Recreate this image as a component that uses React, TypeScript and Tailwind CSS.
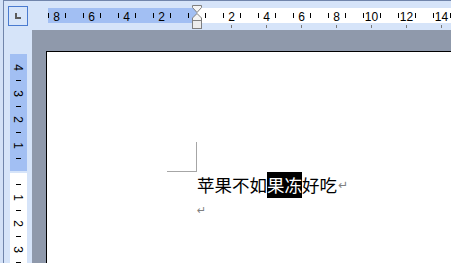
import React from "react";

// horizontal ruler: origin at the left indent, 17.5px per unit
const H_ORIGIN = 196.5;
const H_UNIT = 17.5;
// vertical ruler: origin at top margin, 26px per unit
const V_ORIGIN = 171.5;
const V_UNIT = 26;

function TopRuler() {
  const ticks: number[] = [];
  for (let k = -9; k <= 15; k++) {
    if (k === 0) continue;
    const p = H_ORIGIN + (k > 0 ? k - 0.5 : k + 0.5) * H_UNIT;
    if (p >= 47 && p <= 451) ticks.push(p);
  }
  const labels: { x: number; t: string }[] = [];
  for (let k = 1; k <= 4; k++) labels.push({ x: H_ORIGIN - 2 * k * H_UNIT, t: String(2 * k) });
  for (let k = 1; k <= 7; k++) labels.push({ x: H_ORIGIN + 2 * k * H_UNIT, t: String(2 * k) });
  const tabs = [1, 2, 3, 4, 5, 6, 7].map((k) => H_ORIGIN + 2 * k * H_UNIT);

  return (
    <svg width={419} height={29} viewBox="32 1 419 29" className="block shrink-0">
      <rect x={48} y={8} width={149} height={15} fill="#a2bff3" />
      <rect x={197} y={8} width={254} height={15} fill="#ffffff" />
      {ticks.map((p) => (
        <rect key={p} x={Math.round(p)} y={13} width={1} height={5} fill="#000" />
      ))}
      {labels.map((l) => (
        <text
          key={l.x}
          x={l.x}
          y={20.5}
          textAnchor="middle"
          fontSize={12}
          fontFamily="'Liberation Sans', Arial, sans-serif"
          fill="#000"
        >
          {l.t}
        </text>
      ))}
      {tabs.map((p) => (
        <rect key={p} x={Math.floor(p)} y={25} width={1} height={3} fill="#7a7a7a" />
      ))}
      {/* indent markers */}
      <polygon
        points="192.5,5.5 201.5,5.5 201.5,7.5 197,12.5 192.5,7.5"
        fill="#f4f4f4"
        stroke="#7f7f7f"
      />
      <polygon
        points="197,13.5 201.5,18 201.5,20.5 192.5,20.5 192.5,18"
        fill="#f4f4f4"
        stroke="#7f7f7f"
      />
      <rect x={192.5} y={20.5} width={9} height={8} fill="#ececec" stroke="#7f7f7f" />
    </svg>
  );
}

function LeftRuler() {
  const labels = [
    { y: V_ORIGIN - 4 * V_UNIT, t: "4" },
    { y: V_ORIGIN - 3 * V_UNIT, t: "3" },
    { y: V_ORIGIN - 2 * V_UNIT, t: "2" },
    { y: V_ORIGIN - 1 * V_UNIT, t: "1" },
    { y: V_ORIGIN + 1 * V_UNIT, t: "1" },
    { y: V_ORIGIN + 2 * V_UNIT, t: "2" },
    { y: V_ORIGIN + 3 * V_UNIT, t: "3" },
  ];
  const ticks = [-3.5, -2.5, -1.5, -0.5, 0.5, 1.5, 2.5, 3.5].map((k) => V_ORIGIN + k * V_UNIT);

  return (
    <svg width={28} height={233} viewBox="4 30 28 233" className="block">
      <rect x={10} y={54} width={17} height={117} fill="#a2bff3" />
      <rect x={10} y={173} width={17} height={90} fill="#ffffff" />
      {ticks.map((p) => (
        <rect key={p} x={16} y={Math.floor(p)} width={5} height={1} fill="#000" />
      ))}
      {labels.map((l) => (
        <text
          key={l.y}
          transform={`translate(13.5 ${l.y}) rotate(90)`}
          textAnchor="middle"
          fontSize={12}
          fontFamily="'Liberation Sans', Arial, sans-serif"
          fill="#000"
        >
          {l.t}
        </text>
      ))}
    </svg>
  );
}

function TabSelector() {
  return (
    <div className="h-[20px] w-[20px] border border-[#4a7bd0] bg-[#d7e5fa]">
      <svg width={18} height={18} viewBox="0 0 18 18" className="block">
        <rect x={6} y={6} width={2} height={6} fill="#5c5c5c" />
        <rect x={6} y={10} width={6} height={2} fill="#5c5c5c" />
      </svg>
    </div>
  );
}

export default function App() {
  return (
    <div className="flex h-[263px] w-[451px] overflow-hidden bg-[#d3e1f7] pl-[3px]">
      <div className="flex flex-1 flex-col border-l border-t border-[#7185ab] bg-[#d6e4f9]">
        {/* top bar with horizontal ruler */}
        <div className="flex h-[29px] shrink-0">
          <div className="w-[28px] shrink-0 pl-[4px] pt-[5px]">
            <TabSelector />
          </div>
          <TopRuler />
        </div>

        <div className="flex min-h-0 flex-1">
          <div className="w-[28px] shrink-0">
            <LeftRuler />
          </div>

          {/* workspace */}
          <div className="flex flex-1 bg-[#8f99ab] pl-[14px] pt-[21px]">
            <div
              className="flex-1 border-l border-t border-black bg-white pt-[90px]"
              style={{ fontFamily: "'Noto Sans CJK SC', 'Noto Sans', sans-serif" }}
            >
              <div className="ml-[120px] h-[30px] w-[30px] border-b border-r border-[#a6a6a6]" />
              <div className="ml-[150px] flex h-[26px] items-center whitespace-nowrap text-[17.5px] leading-[26px] text-black">
                <span>苹果不如</span>
                <span className="inline-block h-[26px] bg-black text-white">果冻</span>
                <span>好吃</span>
                <span className="ml-px text-[12px] leading-[26px] text-[#808080]" style={{ fontFamily: "'DejaVu Sans', sans-serif" }}>
                  ↵
                </span>
              </div>
              <div className="ml-[150px] flex h-[26px] items-center">
                <span className="text-[11px] leading-[26px] text-[#808080]" style={{ fontFamily: "'DejaVu Sans', sans-serif" }}>
                  ↵
                </span>
              </div>
            </div>
          </div>
        </div>
      </div>
    </div>
  );
}
